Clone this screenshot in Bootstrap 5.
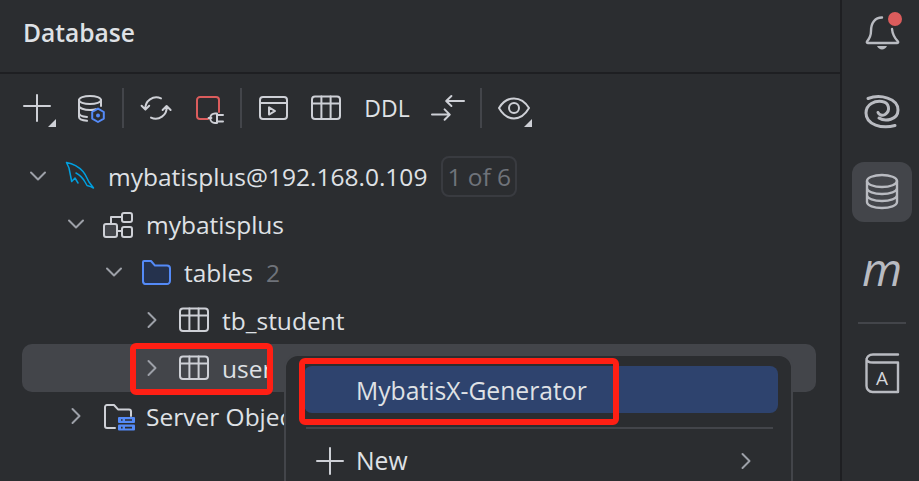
<!DOCTYPE html>
<html lang="en">
<head>
<meta charset="utf-8">
<title>Database</title>
<link href="https://cdn.jsdelivr.net/npm/bootstrap@5.3.0/dist/css/bootstrap.min.css" rel="stylesheet">
<style>
html,body{margin:0;height:481px;overflow:hidden;background:#2b2d30}
.ide{position:relative;width:919px;height:481px;overflow:hidden;background:#2b2d30;color:#dfe1e5;font-family:"Open Sans","Noto Sans",sans-serif;font-size:24.500px;line-height:32px}
.panel{width:840px;flex:none}
.strip{width:79px;flex:none;border-left:2px solid #1e1f22;padding-top:2px;padding-left:3px;gap:20px}
.head{height:74px;border-bottom:2px solid #1e1f22;padding-left:23px;padding-bottom:7px;font-weight:600;font-size:24.600px}
.bar{height:68px;padding-left:10px}
.tool{width:54px;height:32px;flex:none}
.tool-n{width:52px}
.tool-t{width:70px;font-size:23px}
.vsep{width:2px;height:40px;background:#43454a;flex:none}
.m1{margin-left:4px;margin-right:5px}
.m2{margin-left:2px;margin-right:6px}
.m3{margin-left:4px;margin-right:5px}
.ml1{margin-left:1px}
.ico{width:32px;height:32px;overflow:visible;flex:none}
.ln{fill:none;stroke:#ced0d6;stroke-width:1;stroke-linecap:round;stroke-linejoin:round}
.tf{fill:#ced0d6}
.tree{margin:10px 0 0 22px;width:794px}
.trow{height:48px;border-radius:10px;white-space:nowrap}
.trow-on{background:#43454a}
.d0{padding-left:4px}.d1{padding-left:42px}.d2{padding-left:80px}.d3{padding-left:118px}
.chev{width:24px;height:24px;flex:none;fill:none;stroke:#9da0a8;stroke-width:2;stroke-linecap:round;stroke-linejoin:round}
.ti{margin-left:14px;margin-right:12px}
.tx{padding-top:2px}
.cnt{color:#6f737a;margin-left:13px;padding-top:2px}
.pill{margin-left:14px;border:2px solid #393b40;border-radius:8px;color:#6f737a;height:41px;padding:0 4px;line-height:37px}
.sbtn{width:60px;height:60px;border-radius:12px;flex:none}
.sbtn-on{background:#43454a}
.sico{width:40px;height:40px;overflow:visible}
.sl{fill:none;stroke:#b9bbc1;stroke-width:2.400;stroke-linecap:round;stroke-linejoin:round}
.sl-w{stroke-width:3}
.mm{font-family:"Open Sans",sans-serif;font-style:italic;font-size:46px;line-height:60px;color:#b9bbc1;padding-bottom:8px}
.hsep{width:48px;height:2px;background:#43454a;flex:none;margin-bottom:-1px}
.pop{position:absolute;left:284px;top:354px;width:509px;height:140px;background:#2b2d30;border:2px solid #43454a;border-radius:14px;padding:10px 13px 0 18px;font-size:24.700px}
.pop-sel{height:47px;background:#2e436e;border-radius:8px;padding-left:52px}
.pop-div{height:2px;background:#43454a;margin:14px 5px 0 2px}
.pop-item{height:48px;margin-top:8px;padding-left:10px;padding-right:20px}
.pop-ico{width:32px;height:32px;margin-right:10px;flex:none}
.mark-a,.mark-b{position:absolute;border:6px solid #ff1f14;border-radius:6px;pointer-events:none}
.mark-a{left:130px;top:343px;width:143px;height:52px}
.mark-b{left:299px;top:358px;width:320px;height:67px}
</style>
</head>
<body>
<div class="ide d-flex">
  <div class="panel">
    <div class="head d-flex align-items-center">Database</div>
    <div class="bar d-flex align-items-center">
      <div class="tool d-flex justify-content-center align-items-center"><svg class="ico" viewBox="0 0 16 16"><path class="ln" d="M8 2.500v13M1.500 8h13" transform="translate(0 -1)"/><path class="tf" d="M17.500 13.500v4h-4z"/></svg></div>
      <div class="tool d-flex justify-content-center align-items-center"><svg class="ico" viewBox="0 0 16 16"><ellipse class="ln" cx="7.500" cy="4" rx="5.500" ry="2"/><path class="ln" d="M2 4v8.500c0 1 2 1.700 4 1.900M13 4v3M2 7c0 1 2.500 2 5.500 2 1 0 2-.1 3-.4M2 10.500c0 1 1.800 1.800 4 2"/><path d="M11.500 8.300l2.900 1.700v3.300l-2.900 1.700-2.900-1.700v-3.300z" fill="#2b2d30" stroke="#548af7" stroke-width="1" stroke-linejoin="round"/><circle cx="11.500" cy="11.700" r="1" fill="#548af7"/></svg></div>
      <div class="vsep m1"></div>
      <div class="tool d-flex justify-content-center align-items-center"><svg class="ico" viewBox="0 0 16 16"><path class="ln" d="M10.500 3.200A5.500 5.500 0 0 0 2.700 8.700M.8 6.900l1.900 1.900 1.900-1.900M5.500 12.800A5.500 5.500 0 0 0 13.300 7.300M11.300 9l2-2 2 2"/></svg></div>
      <div class="tool ml1 d-flex justify-content-center align-items-center"><svg class="ico" viewBox="0 0 16 16"><path d="M6.500 13.500H2.500A1.500 1.500 0 0 1 1 12V4a1.500 1.500 0 0 1 1.500-1.500H10.500A1.500 1.500 0 0 1 12 4v6" fill="none" stroke="#db5c5c" stroke-width="1" stroke-linecap="round"/><path class="ln" d="M6.800 13h1.400M11 10.700H10a2.300 2.300 0 0 0 0 4.800h1zM11 11.500h3M11 14.700h3"/></svg></div>
      <div class="vsep m2"></div>
      <div class="tool tool-n d-flex justify-content-center align-items-center"><svg class="ico" viewBox="0 0 16 16"><rect class="ln" x="1" y="2.500" width="13.500" height="11" rx="1.500"/><path class="ln" d="M1 5.500h13.500M5.500 7.700v3.600l3-1.800z"/></svg></div>
      <div class="tool tool-n d-flex justify-content-center align-items-center"><svg class="ico" viewBox="0 0 16 16"><rect class="ln" x="1" y="2.200" width="14" height="11.300" rx="1.500"/><path class="ln" d="M1 5.700h14M5.700 2.200v11.300M10.300 2.200v11.300"/></svg></div>
      <div class="tool tool-t d-flex justify-content-center align-items-center">DDL</div>
      <div class="tool d-flex justify-content-center align-items-center"><svg class="ico" viewBox="0 0 16 16"><path class="ln" d="M15.500 4.500H6.800M9.200 2L6.600 4.500 9.200 7M-.5 11.300H8.300M5.800 8.700L8.400 11.300 5.800 13.900"/></svg></div>
      <div class="vsep m3"></div>
      <div class="tool d-flex justify-content-center align-items-center"><svg class="ico" viewBox="0 0 16 16"><path class="ln" d="M.5 8C2.500 4.700 5 3.200 8 3.200S13.500 4.700 15.500 8C13.500 11.500 11 13.200 8 13.200S2.500 11.500.5 8z"/><circle class="ln" cx="8" cy="8" r="2.500"/><path class="tf" d="M17 13.500v4h-4z"/></svg></div>
    </div>
    <div class="tree">
      <div class="trow d0 d-flex align-items-center">
        <svg class="chev" viewBox="0 0 24 24"><path d="M5 8.500l7 7 7-7"/></svg>
        <svg class="ico ti" viewBox="0 0 32 32"><path d="M2.500 2.500C8 3.500 14 6 19 11.500c3 3.500 4 7 6 10.500l4.500 6c-2.500-1.500-4.500-2-6.500-2.500l-2-3.500c-2-3.500-5-7-9-9M2.500 2.500L5 8l2.700 13.500L11 18l3 5" fill="none" stroke="#00a0e0" stroke-width="1.500" stroke-linejoin="round" stroke-linecap="round"/></svg>
        <span class="tx">mybatisplus@192.168.0.109</span><span class="pill">1 of 6</span>
      </div>
      <div class="trow d1 d-flex align-items-center">
        <svg class="chev" viewBox="0 0 24 24"><path d="M5 8.500l7 7 7-7"/></svg>
        <svg class="ico ti" viewBox="0 0 16 16"><rect x="1" y="8" width="6.500" height="6.500" rx="1" fill="#43454a" stroke="#ced0d6"/><rect class="ln" x="10" y="2.500" width="5" height="4.500" rx="1"/><rect class="ln" x="10" y="9.500" width="5" height="5" rx="1"/><path class="ln" d="M4.500 8V4.500H10M7.500 11.500H10"/></svg>
        <span class="tx">mybatisplus</span>
      </div>
      <div class="trow d2 d-flex align-items-center">
        <svg class="chev" viewBox="0 0 24 24"><path d="M5 8.500l7 7 7-7"/></svg>
        <svg class="ico ti" viewBox="0 0 16 16"><path d="M2 2.500h3.500l2 2.300h6A1.500 1.500 0 0 1 15 6.300v6.200a1.500 1.500 0 0 1-1.500 1.500h-11A1.500 1.500 0 0 1 1.500 12.500V3A.5.5 0 0 1 2 2.500z" fill="#25324d" stroke="#548af7" stroke-linejoin="round"/></svg>
        <span class="tx">tables</span><span class="cnt">2</span>
      </div>
      <div class="trow d3 d-flex align-items-center">
        <svg class="chev" viewBox="0 0 24 24"><path d="M8.500 5l7 7-7 7"/></svg>
        <svg class="ico ti" viewBox="0 0 16 16"><rect class="ln" x="1" y="2.200" width="14" height="11.300" rx="1.500"/><path class="ln" d="M1 5.700h14M5.700 2.200v11.300M10.300 2.200v11.300"/></svg>
        <span class="tx">tb_student</span>
      </div>
      <div class="trow trow-on d3 d-flex align-items-center">
        <svg class="chev" viewBox="0 0 24 24"><path d="M8.500 5l7 7-7 7"/></svg>
        <svg class="ico ti" viewBox="0 0 16 16"><rect class="ln" x="1" y="2.200" width="14" height="11.300" rx="1.500"/><path class="ln" d="M1 5.700h14M5.700 2.200v11.300M10.300 2.200v11.300"/></svg>
        <span class="tx">user</span>
      </div>
      <div class="trow d1 d-flex align-items-center">
        <svg class="chev" viewBox="0 0 24 24"><path d="M8.500 5l7 7-7 7"/></svg>
        <svg class="ico ti" viewBox="0 0 16 16"><path class="ln" d="M6.500 14H2.500A1 1 0 0 1 1.500 13V3.500a1 1 0 0 1 1-1H6l2 2.200h5.500a1 1 0 0 1 1 1V8"/><rect x="8" y="8.500" width="8.500" height="3" rx=".5" fill="#548af7"/><rect x="8" y="12.300" width="8.500" height="3" rx=".5" fill="#548af7"/><path d="M9.500 10h.8M11.500 10h3.500M9.500 13.800h.8M11.500 13.800h3.500" stroke="#2b2d30" stroke-width=".8"/></svg>
        <span class="tx">Server Objects</span>
      </div>
    </div>
  </div>
  <div class="strip d-flex flex-column align-items-center">
    <div class="sbtn d-flex align-items-center justify-content-center"><svg class="sico" viewBox="0 0 40 40"><path class="sl" d="M5 29.500c3-3.500 4-6 4-10.500C9 11 13 5.500 20 5.500M30 17c.5 5 2.500 9 6 12.500 .5 1 0 1.500-1 1.500H6c-1 0-1.500-.5-1-1.500"/><path d="M15 34h10c-1 2-3 3.500-5 3.500S16 36 15 34z" fill="#b9bbc1"/><circle cx="33" cy="7" r="7" fill="#db5c5c"/></svg></div>
    <div class="sbtn d-flex align-items-center justify-content-center"><svg class="sico" viewBox="0 0 40 40"><path class="sl sl-w" d="M6 6.500C18 2 36 6 36 18c0 10-13 12-19 8M33 33.500C20 37 4 33 4 21 4 12 13 8.500 20 9.500c7 1 9 9 3 13-3 1.500-6 .5-7-2"/></svg></div>
    <div class="sbtn sbtn-on d-flex align-items-center justify-content-center"><svg class="sico" viewBox="0 0 40 40"><ellipse class="sl" cx="20" cy="9" rx="15" ry="6"/><path class="sl" d="M5 9v21c0 3.500 7 6 15 6s15-2.500 15-6V9M5 16c0 3.500 7 6 15 6s15-2.500 15-6M5 23c0 3.500 7 6 15 6s15-2.500 15-6"/></svg></div>
    <div class="sbtn mm d-flex align-items-center justify-content-center">m</div>
    <div class="hsep"></div>
    <div class="sbtn d-flex align-items-center justify-content-center"><svg class="sico" viewBox="0 0 40 40"><path class="sl" d="M36 1.500H11C7 1.500 4.500 4 4.500 7v26c0 3 2.500 6 6 6H36V9.500H11C7 9.500 4.500 8 4.500 6"/><text x="20" y="32" font-size="19" fill="#d4d6db" text-anchor="middle" font-family="Open Sans, sans-serif">A</text></svg></div>
  </div>
  <div class="pop">
    <div class="pop-sel d-flex align-items-center tx">MybatisX-Generator</div>
    <div class="pop-div"></div>
    <div class="pop-item d-flex align-items-center">
      <svg class="pop-ico" viewBox="0 0 16 16"><path class="ln" d="M8 1.500v13M1.500 8h13"/></svg>
      <span class="flex-grow-1">New</span>
      <svg class="chev" viewBox="0 0 24 24"><path d="M8.500 5l7 7-7 7"/></svg>
    </div>
  </div>
  <div class="mark-a"></div>
  <div class="mark-b"></div>
</div>
<script src="https://cdn.jsdelivr.net/npm/bootstrap@5.3.0/dist/js/bootstrap.bundle.min.js"></script>
</body>
</html>
